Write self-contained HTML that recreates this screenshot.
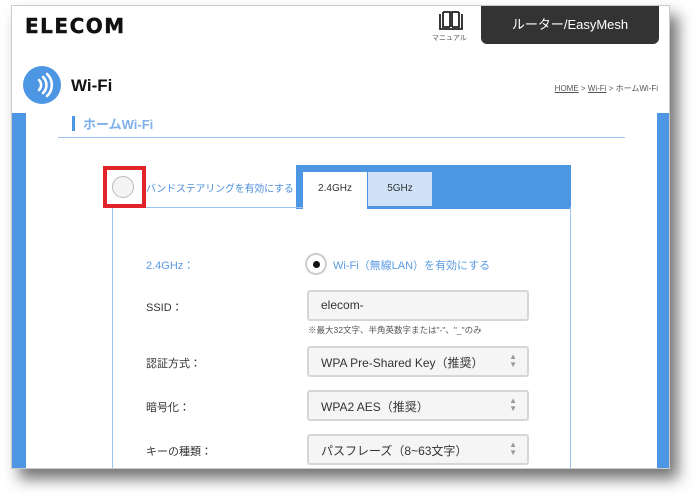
<!DOCTYPE html>
<html><head><meta charset="utf-8"><style>
*{margin:0;padding:0;box-sizing:border-box}
body{width:700px;height:504px;background:#fff;position:relative;overflow:hidden;font-family:"Liberation Sans","Noto Sans CJK JP",sans-serif}
.win{position:absolute;left:11px;top:5px;width:659px;height:464px;background:#fff;border:1px solid #ccc;box-shadow:8px 10px 14px rgba(0,0,0,.55);overflow:hidden}
.a{position:absolute}
.bar{background:#4d96e3}
.lbl{position:absolute;left:134px;font-size:11px;color:#333}
.inp{position:absolute;left:295px;width:222px;height:31px;border:2px solid #d6d6d6;border-radius:3px;background:#f5f5f5;font-size:12px;color:#333;padding:6px 0 0 12px}
.arr{position:absolute;right:10px;top:5px;color:#999;font-size:8px;line-height:8px;text-align:center}
</style></head><body>
<div class="win">
  <div class="a" style="left:13px;top:8px;font-size:20px;font-weight:bold;letter-spacing:1.5px;color:#111;font-family:'DejaVu Sans',sans-serif;-webkit-text-stroke:0.4px #111">ELECOM</div>
  <svg class="a" style="left:426px;top:4px" width="26" height="22" viewBox="0 0 26 22"><path d="M2 4v15h22V4M5 2v15h7M5 2h7v15M21 2v15h-7M21 2h-7v15" fill="none" stroke="#222" stroke-width="1.8"/></svg>
  <div class="a" style="left:420px;top:27px;font-size:7px;color:#555">マニュアル</div>
  <div class="a" style="left:469px;top:-1px;width:178px;height:39px;background:#333;border-radius:0 0 6px 6px;color:#fff;font-size:13px;text-align:center;line-height:40px">ルーター/EasyMesh</div>
  <svg class="a" style="left:11px;top:60px" width="38" height="38"><circle cx="19" cy="19" r="19" fill="#4d96e3"/><path d="M16 14a7 7 0 0 1 0 10M20 11a11 11 0 0 1 0 16M24 8a15 15 0 0 1 0 22" fill="none" stroke="#fff" stroke-width="2.6" stroke-linecap="round"/></svg>
  <div class="a" style="left:59px;top:70px;font-size:17px;font-weight:bold;color:#111">Wi-Fi</div>
  <div class="a" style="right:11px;top:77px;font-size:8px;color:#555"><u>HOME</u> &gt; <u>Wi-Fi</u> &gt; ホームWi-Fi</div>
  <div class="a bar" style="left:0;top:107px;width:14px;height:360px"></div>
  <div class="a bar" style="left:645px;top:107px;width:14px;height:360px"></div>
  <div class="a bar" style="left:60px;top:110px;width:3px;height:15px"></div>
  <div class="a" style="left:71px;top:108px;font-size:13px;font-weight:bold;color:#7fb0ea">ホームWi-Fi</div>
  <div class="a" style="left:46px;top:131px;width:567px;height:1px;background:#9cc3ef"></div>
  <div class="a bar" style="left:284px;top:159px;width:275px;height:44px"></div>
  <div class="a" style="left:291px;top:166px;width:64px;height:40px;background:#fff;font-size:10px;color:#333;text-align:center;line-height:34px">2.4GHz</div>
  <div class="a" style="left:356px;top:166px;width:64px;height:34px;background:#cfe2f8;font-size:10px;color:#333;text-align:center;line-height:34px">5GHz</div>
  <div class="a" style="left:100px;top:201px;width:459px;height:270px;border:1px solid #9cc3ef;border-top:none"></div>
  <div class="a" style="left:100px;top:201px;width:191px;height:1px;background:#9cc3ef"></div>
  <div class="a" style="left:91px;top:160px;width:43px;height:42px;border:4px solid #e0242a;background:#fff"></div>
  <div class="a" style="left:100px;top:170px;width:22px;height:22px;border-radius:50%;border:1px solid #bbb;background:#f4f4f4"></div>
  <div class="a" style="left:134px;top:174px;font-size:10px;letter-spacing:-0.2px;color:#4d8fdc;white-space:nowrap">バンドステアリングを有効にする</div>
  <div class="lbl" style="top:251px;color:#5a9be4">2.4GHz：</div>
  <div class="a" style="left:293px;top:247px;width:22px;height:22px;border-radius:50%;border:2px solid #ccc;background:#fff"></div>
  <div class="a" style="left:301px;top:255px;width:7px;height:7px;border-radius:50%;background:#111"></div>
  <div class="a" style="left:321px;top:251px;font-size:11px;color:#5a9be4">Wi-Fi（無線LAN）を有効にする</div>
  <div class="lbl" style="top:293px">SSID：</div>
  <div class="inp" style="top:284px">elecom-</div>
  <div class="a" style="left:296px;top:318px;font-size:8.5px;color:#555">※最大32文字、半角英数字または"-"、"_"のみ</div>
  <div class="lbl" style="top:349px">認証方式：</div>
  <div class="inp" style="top:340px">WPA Pre-Shared Key（推奨）<div class="arr">▲<br>▼</div></div>
  <div class="lbl" style="top:393px">暗号化：</div>
  <div class="inp" style="top:384px">WPA2 AES（推奨）<div class="arr">▲<br>▼</div></div>
  <div class="lbl" style="top:437px">キーの種類：</div>
  <div class="inp" style="top:428px">パスフレーズ（8~63文字）<div class="arr">▲<br>▼</div></div>
</div>
</body></html>
